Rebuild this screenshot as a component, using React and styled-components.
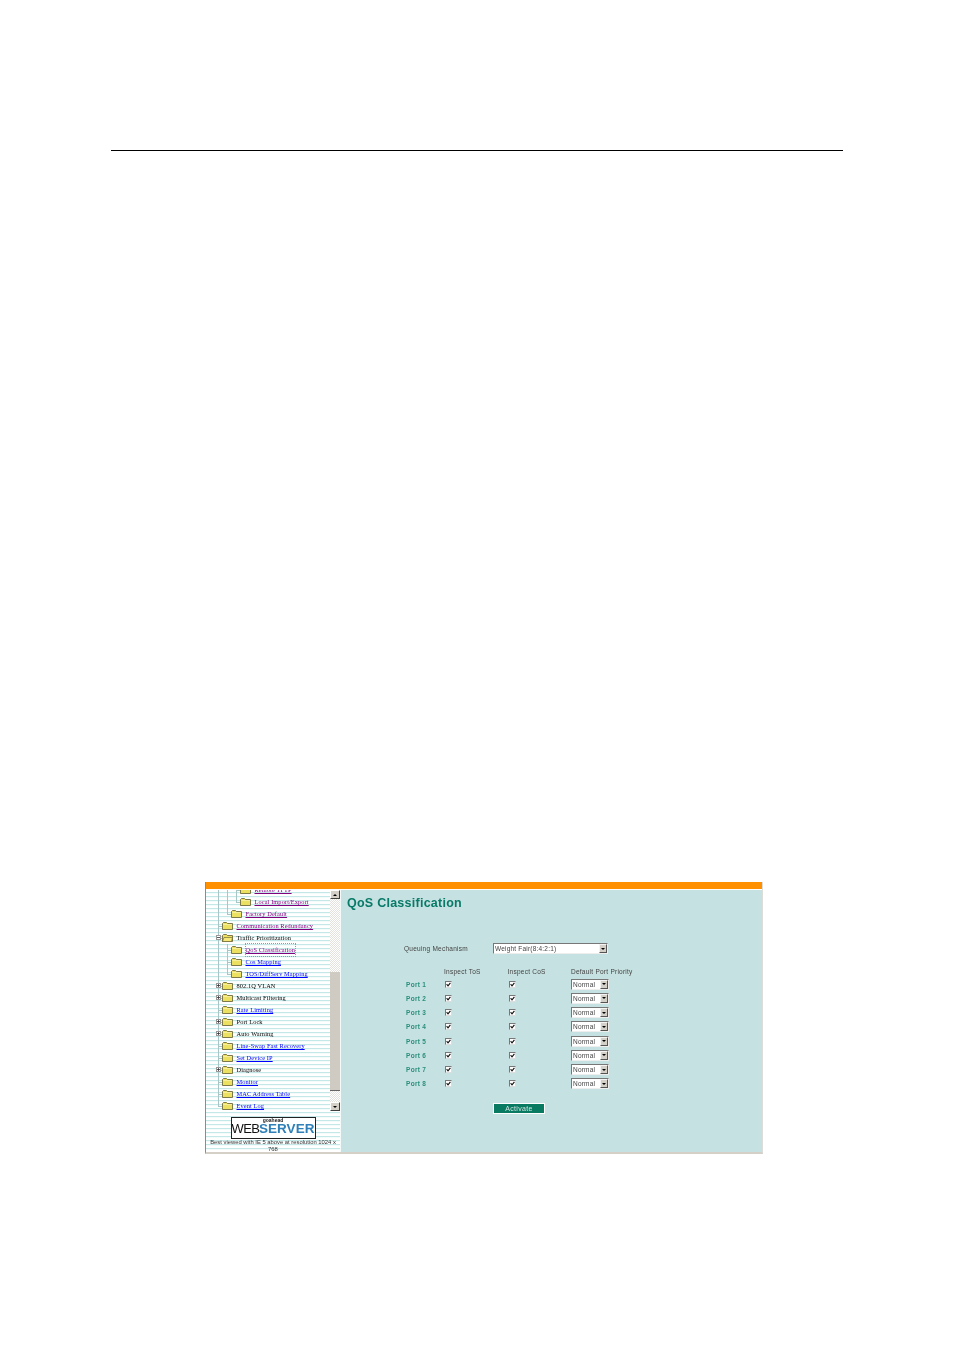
import React from "react";
import styled, { createGlobalStyle } from "styled-components";

const Global = createGlobalStyle`
  html, body { margin: 0; padding: 0; background: #fff; }
`;

const Page = styled.div`
  width: 954px;
  height: 1350px;
  padding-top: 150px;
  box-sizing: border-box;
  overflow: hidden;
`;

const Rule = styled.div`
  height: 1px;
  margin: 0 111px;
  background: #000;
`;

const Shot = styled.div`
  width: 558px;
  height: 272px;
  margin: 731px 0 0 205px;
  border-left: 1px solid #8a8a8a;
  border-right: 1px solid #dcdcd8;
  border-bottom: 2px solid #d4d0c8;
  box-sizing: border-box;
  background: #c6e1e1;
  display: flex;
  flex-direction: column;
  filter: blur(0.4px);
`;

const TopBar = styled.div`
  height: 7px;
  flex: none;
  background: #ff9000;
  border-bottom: 1px solid #fff;
`;

const Columns = styled.div`
  flex: 1;
  display: flex;
  min-height: 0;
`;

const Sidebar = styled.aside`
  width: 134px;
  flex: none;
  display: flex;
  flex-direction: column;
  background: repeating-linear-gradient(#fff 0 2px, #c4e8e8 2px 3px, #f4fbfb 3px 4px);
  border-right: 1px solid #f4fafa;
`;

const TreePane = styled.div`
  height: 221px;
  flex: none;
  display: flex;
`;

const Tree = styled.div`
  flex: 1;
  overflow: hidden;
  padding: 0 0 0 7px;
`;

const TreeList = styled.div`
  margin-top: -6px;
`;

const Row = styled.div`
  height: 12px;
  display: flex;
  align-items: center;
  font: 6.35px/12px "Liberation Serif", serif;
  white-space: nowrap;
`;

const Guide = styled.span`
  position: relative;
  width: 9px;
  height: 12px;
  flex: none;
  &::before {
    content: "";
    position: absolute;
    left: 5px;
    top: 0;
    bottom: ${({ $end }) => ($end ? "6px" : "0")};
    border-left: 1px solid #a8c6c6;
  }
  &::after {
    content: "";
    position: absolute;
    left: 5px;
    right: 0;
    top: 6px;
    border-top: ${({ $end, $branch }) => ($end || $branch ? "1px solid #a8c6c6" : "none")};
  }
`;

const Expander = styled.span`
  position: absolute;
  left: 3px;
  top: 3px;
  z-index: 1;
  display: block;
  line-height: 0;
`;

const Label = styled.a`
  margin-left: 3.5px;
  letter-spacing: 0.1px;
  color: ${({ $kind }) =>
    $kind === "visited" ? "#800080" : $kind === "link" ? "#0000ff" : "#000"};
  text-decoration: ${({ $kind }) => ($kind ? "underline" : "none")};
  outline: ${({ $focus }) => ($focus ? "1px dotted #999" : "none")};
`;

const Scrollbar = styled.div`
  width: 10px;
  flex: none;
  display: flex;
  flex-direction: column;
  background: repeating-conic-gradient(#e4e2dc 0 25%, #fff 0 50%) 0 0 / 2px 2px;
`;

const ScrollButton = styled.div`
  height: 9px;
  flex: none;
  background: #d4d0c8;
  border: 1px solid;
  border-color: #fff #404040 #404040 #fff;
  box-sizing: border-box;
  display: flex;
  align-items: center;
  justify-content: center;
  &::before {
    content: "";
    border-left: 2px solid transparent;
    border-right: 2px solid transparent;
    ${({ $down }) => ($down ? "border-top" : "border-bottom")}: 2px solid #000;
  }
`;

const ScrollTrack = styled.div`
  flex: ${({ $short }) => ($short ? "none" : "1")};
  height: ${({ $short }) => ($short ? "11px" : "auto")};
`;

const ScrollThumb = styled.div`
  height: 119px;
  flex: none;
  background: #cfcbc3;
  border-bottom: 1px solid #666;
  box-sizing: border-box;
`;

const SideFoot = styled.div`
  flex: 1;
  display: flex;
  flex-direction: column;
  align-items: center;
  padding: 6px 3px 0;
`;

const Logo = styled.div`
  width: 85px;
  height: 22px;
  box-sizing: border-box;
  border: 1px solid #222;
  background: #fff;
  display: flex;
  flex-direction: column;
  align-items: center;
  overflow: hidden;
`;

const LogoTop = styled.span`
  font: bold 5px/5px "Liberation Sans", sans-serif;
  color: #222;
`;

const LogoMain = styled.span`
  font: 13px/12px "Liberation Sans", sans-serif;
  letter-spacing: -0.7px;
  color: #111;
  white-space: nowrap;
  b {
    color: #2f80b8;
    font-size: 13.5px;
    font-weight: bold;
    letter-spacing: 0;
  }
`;

const FootNote = styled.p`
  margin: 0;
  font: 5.85px/7px "Liberation Sans", sans-serif;
  color: #333;
  text-align: center;
`;

const Main = styled.main`
  flex: 1;
  padding: 6px 0 0 6px;
  font-family: "Liberation Sans", sans-serif;
`;

const Title = styled.h1`
  margin: 0;
  font: bold 12.5px/15px "Liberation Sans", sans-serif;
  letter-spacing: 0.25px;
  color: #087a68;
`;

const QueueRow = styled.div`
  display: flex;
  align-items: center;
  height: 11px;
  margin: 32px 0 0 57px;
`;

const FieldText = styled.span`
  font-size: 6.5px;
  letter-spacing: 0.25px;
  color: #444;
  white-space: nowrap;
`;

const QueueLabel = styled(FieldText)`
  width: 89px;
`;

const Select = styled.div`
  width: ${({ $wide }) => ($wide ? "115px" : "38px")};
  height: 11px;
  box-sizing: border-box;
  display: flex;
  background: #fff;
  border: 1px solid;
  border-color: #777 #eee #eee #777;
  justify-content: space-between;
  align-items: stretch;
  font-size: 6.5px;
  line-height: 9px;
  letter-spacing: 0.2px;
  color: #444;
  padding-left: 1px;
`;

const SelectArrow = styled.span`
  width: 8px;
  flex: none;
  background: #d4d0c8;
  border: 1px solid;
  border-color: #f4f4f4 #555 #555 #f4f4f4;
  box-sizing: border-box;
  display: flex;
  align-items: center;
  justify-content: center;
  &::before {
    content: "";
    border-left: 2px solid transparent;
    border-right: 2px solid transparent;
    border-top: 2px solid #000;
  }
`;

const PortGrid = styled.div`
  display: grid;
  grid-template-columns: 38px 63.5px 63.5px 70px;
  grid-template-rows: 11px;
  grid-auto-rows: 14.28px;
  margin: 12px 0 0 59px;
  align-items: center;
`;

const Head = styled(FieldText)`
  justify-self: start;
`;

const PortName = styled.span`
  font: bold 6.5px "Liberation Sans", sans-serif;
  letter-spacing: 0.3px;
  color: #2a8f7c;
`;

const CheckCell = styled.span`
  width: 7px;
  height: 7px;
  box-sizing: border-box;
  background: #fff;
  border: 1px solid;
  border-color: #777 #ddd #ddd #777;
  display: flex;
  margin-left: 1px;
`;

const ActivateWrap = styled.div`
  display: flex;
  margin: 12px 0 0 146px;
`;

const Activate = styled.button`
  width: 52px;
  height: 11px;
  padding: 0;
  box-sizing: border-box;
  background: #087a62;
  border: 1px solid #fff;
  font: 7px/9px "Liberation Sans", sans-serif;
  letter-spacing: 0.3px;
  color: #cfe6e0;
`;

const treeRows = [
  { label: "Remote TFTP", lines: "||L", kind: "visited" },
  { label: "Local Import/Export", lines: "||E", kind: "visited" },
  { label: "Factory Default", lines: "|E", kind: "visited" },
  { label: "Communication Redundancy", lines: "L", kind: "visited" },
  { label: "Traffic Prioritization", lines: "L", toggle: "minus", open: true },
  { label: "QoS Classification", lines: "|L", kind: "visited", focus: true },
  { label: "Cos Mapping", lines: "|L", kind: "link" },
  { label: "TOS/DiffServ Mapping", lines: "|E", kind: "link" },
  { label: "802.1Q VLAN", lines: "L", toggle: "plus" },
  { label: "Multicast Filtering", lines: "L", toggle: "plus" },
  { label: "Rate Limiting", lines: "L", kind: "link" },
  { label: "Port Lock", lines: "L", toggle: "plus" },
  { label: "Auto Warning", lines: "L", toggle: "plus" },
  { label: "Line-Swap Fast Recovery", lines: "L", kind: "link" },
  { label: "Set Device IP", lines: "L", kind: "link" },
  { label: "Diagnose", lines: "L", toggle: "plus" },
  { label: "Monitor", lines: "L", kind: "link" },
  { label: "MAC Address Table", lines: "L", kind: "link" },
  { label: "Event Log", lines: "E", kind: "link" },
];

const Toggle = ({ type }) => (
  <Expander>
    <svg width="5" height="5" viewBox="0 0 5 5">
      <rect x="0.5" y="0.5" width="4" height="4" fill="#fff" stroke="#999" />
      <path d={type === "plus" ? "M1 2.5h3M2.5 1v3" : "M1 2.5h3"} stroke="#333" strokeWidth="0.8" />
    </svg>
  </Expander>
);

const Folder = ({ open }) => (
  <svg width="11" height="8" viewBox="0 0 11 8" style={{ flex: "none" }}>
    <path d="M0.5 7.5V1.5L1.5 0.5H4.5L5.5 1.5H10.5V7.5Z" fill="#ece060" stroke="#5f5a30" strokeWidth="0.8" />
    {open ? (
      <path d="M0.5 7.5L2 3.5H10.5L9.5 7.5Z" fill="#f6e978" stroke="#5f5a30" strokeWidth="0.6" />
    ) : (
      <path d="M1.2 2.6H9.8" stroke="#fbf4b0" strokeWidth="0.8" />
    )}
  </svg>
);

const Check = () => (
  <CheckCell>
    <svg width="5" height="5" viewBox="0 0 5 5">
      <path d="M0.6 2.2L2 3.8L4.4 0.8" fill="none" stroke="#111" strokeWidth="1.1" />
    </svg>
  </CheckCell>
);

const NormalSelect = ({ value, wide }) => (
  <Select $wide={wide}>
    {value}
    <SelectArrow />
  </Select>
);

const ports = [1, 2, 3, 4, 5, 6, 7, 8];

export default function App() {
  return (
    <Page>
      <Global />
      <Rule />
      <Shot>
        <TopBar />
        <Columns>
          <Sidebar>
            <TreePane>
              <Tree>
                <TreeList>
                  {treeRows.map((row) => (
                    <Row key={row.label}>
                      {row.lines.split("").map((c, i) => (
                        <Guide key={i} $branch={c === "L" || c === "E"} $end={c === "E"}>
                          {i === 0 && row.toggle ? <Toggle type={row.toggle} /> : null}
                        </Guide>
                      ))}
                      <Folder open={row.open} />
                      <Label $kind={row.kind} $focus={row.focus}>
                        {row.label}
                      </Label>
                    </Row>
                  ))}
                </TreeList>
              </Tree>
              <Scrollbar>
                <ScrollButton />
                <ScrollTrack />
                <ScrollThumb />
                <ScrollTrack $short />
                <ScrollButton $down />
              </Scrollbar>
            </TreePane>
            <SideFoot>
              <Logo>
                <LogoTop>goahead</LogoTop>
                <LogoMain>
                  WEB<b>SERVER</b>
                </LogoMain>
              </Logo>
              <FootNote>Best viewed with IE 5 above at resolution 1024 x 768</FootNote>
            </SideFoot>
          </Sidebar>
          <Main>
            <Title>QoS Classification</Title>
            <QueueRow>
              <QueueLabel>Queuing Mechanism</QueueLabel>
              <NormalSelect wide value="Weight Fair(8:4:2:1)" />
            </QueueRow>
            <PortGrid>
              <span />
              <Head>Inspect ToS</Head>
              <Head>Inspect CoS</Head>
              <Head>Default Port Priority</Head>
              {ports.map((n) => (
                <React.Fragment key={n}>
                  <PortName>Port {n}</PortName>
                  <Check />
                  <Check />
                  <NormalSelect value="Normal" />
                </React.Fragment>
              ))}
            </PortGrid>
            <ActivateWrap>
              <Activate>Activate</Activate>
            </ActivateWrap>
          </Main>
        </Columns>
      </Shot>
    </Page>
  );
}
